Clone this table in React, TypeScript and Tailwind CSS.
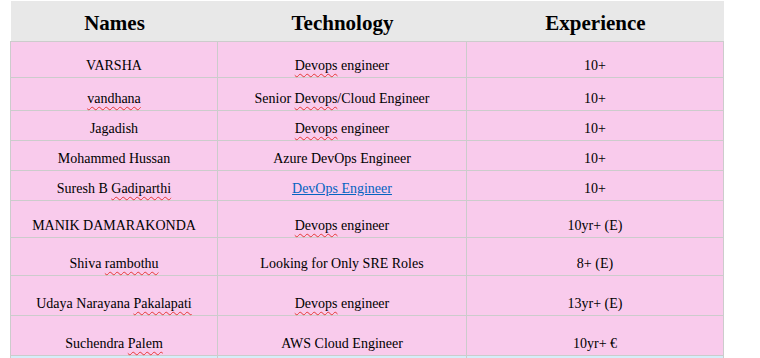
import React from "react";

type Row = {
  name: React.ReactNode;
  tech: React.ReactNode;
  exp: string;
  h: string;
};

// red squiggle the way the editor marks unknown words
const Sp = ({ children }: { children: React.ReactNode }) => (
  <span className="underline decoration-wavy decoration-[#e53935] decoration-1 underline-offset-[3px]">
    {children}
  </span>
);

const devops = (
  <>
    <Sp>Devops</Sp> engineer
  </>
);

const rows: Row[] = [
  { name: "VARSHA", tech: devops, exp: "10+", h: "h-[36px]" },
  {
    name: <Sp>vandhana</Sp>,
    tech: (
      <>
        Senior <Sp>Devops</Sp>/Cloud Engineer
      </>
    ),
    exp: "10+",
    h: "h-[33px]",
  },
  { name: "Jagadish", tech: devops, exp: "10+", h: "h-[30px]" },
  { name: "Mohammed Hussan", tech: "Azure DevOps Engineer", exp: "10+", h: "h-[30px]" },
  {
    name: (
      <>
        Suresh B <Sp>Gadiparthi</Sp>
      </>
    ),
    tech: (
      <a href="#" className="text-[#0563c1] underline">
        DevOps Engineer
      </a>
    ),
    exp: "10+",
    h: "h-[30px]",
  },
  { name: "MANIK DAMARAKONDA", tech: devops, exp: "10yr+ (E)", h: "h-[37px]" },
  {
    name: (
      <>
        Shiva <Sp>rambothu</Sp>
      </>
    ),
    tech: "Looking for Only SRE Roles",
    exp: "8+ (E)",
    h: "h-[38px]",
  },
  {
    name: (
      <>
        Udaya Narayana <Sp>Pakalapati</Sp>
      </>
    ),
    tech: devops,
    exp: "13yr+ (E)",
    h: "h-[40px]",
  },
  {
    name: (
      <>
        Suchendra <Sp>Palem</Sp>
      </>
    ),
    tech: "AWS Cloud Engineer",
    exp: "10yr+ €",
    h: "h-[40px]",
  },
];

const cols = "grid grid-cols-[207px_249px_257px]";

function Cell({ children }: { children?: React.ReactNode }) {
  return (
    <div className="flex items-end justify-center pb-[3px] border-r border-[#cccccc]">
      <span>{children}</span>
    </div>
  );
}

export default function App() {
  return (
    <div className="w-[760px] h-[358px] overflow-hidden bg-white pl-[10px] pt-[1px] text-black font-['Liberation_Serif','Times_New_Roman',serif]">
      <div className="w-[714px]">
        {/* header */}
        <div className={`${cols} ml-[1px] w-[713px] h-[40px] bg-[#e8e8e8] text-[21px] font-bold`}>
          {["Names", "Technology", "Experience"].map((t) => (
            <div key={t} className="flex items-center justify-center pt-[6px]">
              {t}
            </div>
          ))}
        </div>

        {/* body */}
        <div className="border-t border-l border-[#cccccc] text-[14px] leading-4">
          {rows.map((r, i) => (
            <div key={i} className={`${cols} ${r.h} bg-[#f9cbec] border-b border-[#cccccc]`}>
              <Cell>{r.name}</Cell>
              <Cell>{r.tech}</Cell>
              <Cell>{r.exp}</Cell>
            </div>
          ))}
          <div className={`${cols} h-[20px] bg-[#d6eefa]`}>
            <Cell />
            <Cell />
            <Cell />
          </div>
        </div>
      </div>
    </div>
  );
}
